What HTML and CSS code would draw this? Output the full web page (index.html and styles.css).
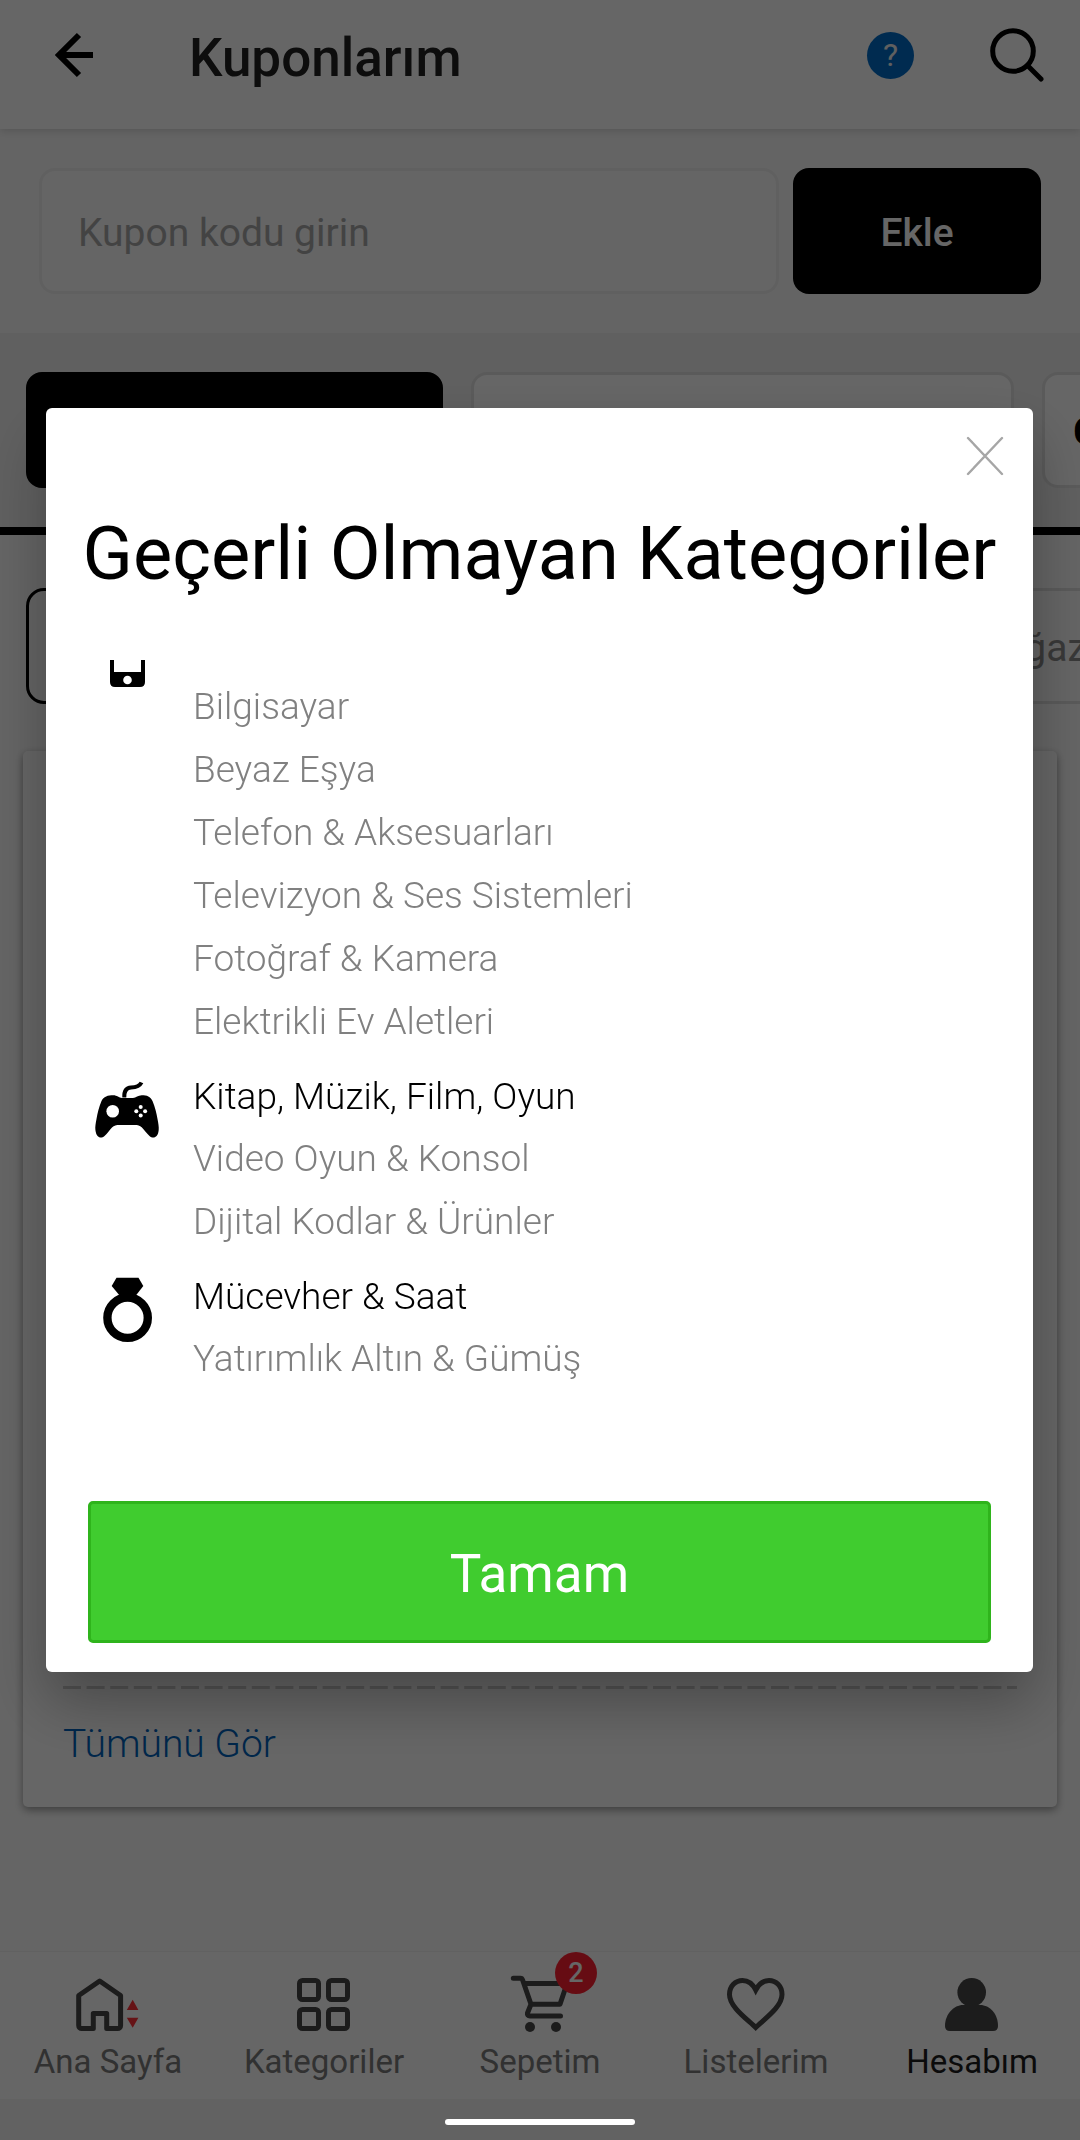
FILE: index.html
```html
<!DOCTYPE html>
<html lang="tr">
<head>
<meta charset="utf-8">
<meta name="viewport" content="width=device-width, initial-scale=1">
<title>Kuponlarım</title>
<link rel="stylesheet" href="styles.css">
</head>
<body>
<div class="page">
  <header class="header">
    <button class="icon-button" type="button" aria-label="Geri">
      <svg width="40" height="46" viewBox="0 0 40 46" fill="none" stroke="#000" stroke-width="6"><path d="M25 3 5 23 25 43M5 23H39"/></svg>
    </button>
    <h1 class="header-title">Kuponlarım</h1>
    <button class="help" type="button" aria-label="Yardım">?</button>
    <button class="icon-button" type="button" aria-label="Ara">
      <svg width="54" height="54" viewBox="0 0 54 54" fill="none" stroke="#000" stroke-width="5"><circle cx="23" cy="23" r="20.3"/><path d="M37.5 37.5 51 51" stroke-linecap="round"/></svg>
    </button>
  </header>

  <form class="coupon-form">
    <input class="coupon-input" type="text" placeholder="Kupon kodu girin" aria-label="Kupon kodu">
    <button class="coupon-add" type="button">Ekle</button>
  </form>

  <div class="tabs">
    <button class="tab tab-active" type="button" aria-label="Kuponlar"></button>
    <button class="tab tab-wide" type="button" aria-label="Fırsatlar"></button>
    <button class="tab" type="button">G</button>
  </div>

  <main class="content">
    <div class="chips">
      <button class="chip chip-active" type="button" aria-label="Tümü"></button>
      <button class="chip" type="button">Mağazalar</button>
    </div>
    <section class="card">
      <svg class="card-divider" height="3" aria-hidden="true"><line x1="0" y1="1.5" x2="100%" y2="1.5" stroke="#d0d0d0" stroke-width="3" stroke-dasharray="18 5.6"/></svg>
      <a class="card-link" href="#">Tümünü Gör</a>
    </section>
  </main>

  <nav class="nav">
    <a class="nav-item" href="#">
      <svg width="72" height="56" viewBox="0 0 72 56"><path d="M27.7 4 48.6 18.5V48.5a3 3 0 0 1-3 3H34.7V36.5H21.3V51.5H9.7a3 3 0 0 1-3-3V18.5z" fill="none" stroke="#464646" stroke-width="5" stroke-linejoin="round"/><path d="M60.7 22.7 66.4 33H54.8zM54.8 40.7H66.4L60.7 50.8z" fill="#ff3038"/></svg>
      <span class="nav-label">Ana Sayfa</span>
    </a>
    <a class="nav-item" href="#">
      <svg width="72" height="56" viewBox="0 0 72 56" fill="none" stroke="#464646" stroke-width="5"><rect x="11.5" y="3.5" width="19" height="19" rx="3"/><rect x="40.5" y="3.5" width="19" height="19" rx="3"/><rect x="11.5" y="32.5" width="19" height="19" rx="3"/><rect x="40.5" y="32.5" width="19" height="19" rx="3"/></svg>
      <span class="nav-label">Kategoriler</span>
    </a>
    <a class="nav-item" href="#">
      <span class="nav-icon">
        <svg width="72" height="56" viewBox="0 0 72 56" overflow="visible"><path d="M9.3 1.3H16.5Q18 1.3 18.6 3L27 27.3H56L63 6.5H21M27 27.3 23.5 36Q23 39 26 39H56.5" fill="none" stroke="#464646" stroke-width="5" stroke-linecap="round" stroke-linejoin="round"/><circle cx="26" cy="50" r="5" fill="#464646"/><circle cx="52" cy="50" r="5" fill="#464646"/></svg>
        <span class="badge">2</span>
      </span>
      <span class="nav-label">Sepetim</span>
    </a>
    <a class="nav-item" href="#">
      <svg width="72" height="56" viewBox="0 0 72 56" fill="none" stroke="#464646" stroke-width="5"><path d="M35.7 50.5C27 42 9.5 30 9.5 17.5C9.5 9 15.5 3.5 22.5 3.5C29 3.5 33 7.5 35.7 13C38.5 7.5 42.5 3.5 49 3.5C56 3.5 62 9 62 17.5C62 30 44.5 42 35.7 50.5z"/></svg>
      <span class="nav-label">Listelerim</span>
    </a>
    <a class="nav-item nav-current" href="#" aria-current="page">
      <svg width="72" height="56" viewBox="0 0 72 56" fill="#464646"><circle cx="35.7" cy="15.3" r="14.3"/><path d="M9 49C9 37 18 28 27 28H44C54 28 62 37 62 49Q62 54 57 54H14Q9 54 9 49z"/></svg>
      <span class="nav-label">Hesabım</span>
    </a>
  </nav>
  <div class="system-bar"></div>
</div>

<div class="overlay">
  <div class="modal" role="dialog" aria-modal="true" aria-labelledby="modal-title">
    <button class="modal-close" type="button" aria-label="Kapat">
      <svg width="38" height="40" viewBox="0 0 38 40" fill="none" stroke="#a6a6a6" stroke-width="2.4" stroke-linecap="round"><path d="M2 2 36 38M36 2 2 38"/></svg>
    </button>
    <h2 class="modal-title" id="modal-title">Geçerli Olmayan Kategoriler</h2>
    <div class="categories">
      <section class="category">
        <svg width="64" height="28" viewBox="0 0 64 28"><path d="M15 0H19V12H46V0H50V22Q50 27 45 27H20Q15 27 15 22z"/><circle cx="32.5" cy="20" r="4.3" fill="#fff"/></svg>
        <ul class="category-list">
          <li>Bilgisayar</li>
          <li>Beyaz Eşya</li>
          <li>Telefon &amp; Aksesuarları</li>
          <li>Televizyon &amp; Ses Sistemleri</li>
          <li>Fotoğraf &amp; Kamera</li>
          <li>Elektrikli Ev Aletleri</li>
        </ul>
      </section>
      <section class="category">
        <svg class="category-icon" width="64" height="64" viewBox="0 -2 64 64"><path d="M29.3 18.5C29 12.5 31 8.8 36 8.5C42 8.3 44.8 7 46.5 3.5" fill="none" stroke="#000" stroke-width="4"/><path d="M18.3 16.3C22 16.3 24 19 27 19H38C41 19 43 16.3 46.7 16.3C52 16.3 55.5 17.5 57.5 22C60 28 61.5 34 62.5 40C63.3 44 64 48 63.7 51C63 59 58 60 54.5 57C51.5 54.5 49 50.5 46.7 48.3C45 46.5 42.5 46 40 46H24.3C21.5 46 19 46.5 17 48.5C14.5 51 12.5 54.5 9.5 57C6 60 1.3 59 .4 51C0 48 .7 44 1.5 40C2.5 34 4 28 6.5 22C8.5 17.5 13 16.3 18.3 16.3z"/><g fill="#fff"><circle cx="17.7" cy="32.3" r="6.3"/><circle cx="45.7" cy="28" r="2"/><circle cx="45.7" cy="36.6" r="2"/><circle cx="41.3" cy="32.3" r="2"/><circle cx="50.1" cy="32.3" r="2"/></g></svg>
        <div>
          <h3 class="category-title">Kitap, Müzik, Film, Oyun</h3>
          <ul class="category-list">
            <li>Video Oyun &amp; Konsol</li>
            <li>Dijital Kodlar &amp; Ürünler</li>
          </ul>
        </div>
      </section>
      <section class="category">
        <svg class="category-icon" width="64" height="66" viewBox="0 0 64 66"><path d="M21.5 .7H43.5L48.3 9 40.5 19H25L16.7 9z"/><circle cx="32.6" cy="40.7" r="20.2" fill="none" stroke="#000" stroke-width="8.4"/></svg>
        <div>
          <h3 class="category-title">Mücevher &amp; Saat</h3>
          <ul class="category-list">
            <li>Yatırımlık Altın &amp; Gümüş</li>
          </ul>
        </div>
      </section>
    </div>
    <button class="modal-ok" type="button">Tamam</button>
  </div>
  <div class="home-indicator"></div>
</div>
</body>
</html>
```
FILE: styles.css
```css
* {
  box-sizing: border-box;
}

body {
  margin: 0;
  font-family: Roboto, "Noto Sans", sans-serif;
  background: #fdfdfd;
  color: #000;
}

h1, h2, h3, ul {
  margin: 0;
  padding: 0;
  font-weight: 400;
  list-style: none;
}

button {
  margin: 0;
  padding: 0;
  border: 0;
  background: none;
  font-family: inherit;
  color: inherit;
}

a {
  text-decoration: none;
}

svg {
  display: block;
}

.page {
  display: flex;
  flex-direction: column;
  min-height: 100vh;
  overflow: hidden;
}

/* top bar */
.header {
  position: relative;
  display: flex;
  align-items: center;
  height: 129px;
  padding: 0 36px 19px 54px;
  background: #fff;
  box-shadow: 0 2px 8px rgba(0, 0, 0, 0.15);
}

.header-title {
  flex: 1;
  padding: 6px 0 0 95px;
  font-size: 53px;
  line-height: 64px;
  font-weight: 500;
  color: #212121;
}

.help {
  width: 47px;
  height: 47px;
  margin-right: 76px;
  border-radius: 50%;
  background: #006cc8;
  color: #f0f0f0;
  font-size: 32px;
  line-height: 47px;
}

/* coupon code entry */
.coupon-form {
  display: flex;
  gap: 14px;
  padding: 39px 39px;
  background: #fafafa;
}

.coupon-input,
.coupon-add {
  height: 126px;
  border-radius: 16px;
  font-size: 39px;
}

.coupon-input {
  flex: 1;
  min-width: 0;
  padding: 3px 36px 0;
  border: 3px solid #f0f0f0;
  background: #fcfcfc;
  font-family: inherit;
}

.coupon-input::placeholder {
  color: #a8a8a8;
  opacity: 1;
}

.coupon-add {
  width: 248px;
  padding-top: 3px;
  background: #000;
  color: #fff;
  font-weight: 500;
}

/* coupon type tabs */
.tabs {
  display: flex;
  gap: 28px;
  padding: 39px 0 39px 26px;
  border-bottom: 8px solid #000;
  background: #f0f0f0;
  overflow: hidden;
}

.tab {
  flex: none;
  width: 417px;
  height: 116px;
  padding: 3px 0 0 28px;
  border: 3px solid #e2e2e2;
  border-radius: 16px;
  background: #fff;
  font-size: 39px;
  font-weight: 700;
  text-align: left;
}

.tab-active {
  border-color: #000;
  background: #000;
}

.tab-wide {
  width: 543px;
}

/* coupon list */
.content {
  flex: 1;
}

.chips {
  display: flex;
  gap: 20px;
  padding: 53px 0 47px 26px;
  overflow: hidden;
}

.chip {
  flex: none;
  width: 420px;
  height: 116px;
  border: 3px solid #e0e0e0;
  border-radius: 18px;
  font-size: 39px;
  color: #8c8c8c;
}

.chip + .chip {
  width: auto;
  margin-left: 452px;
  padding: 3px 48px 0;
}

.chip-active {
  border-color: #000;
}

.card {
  display: flex;
  flex-direction: column;
  justify-content: flex-end;
  min-height: 1056px;
  margin: 0 23px;
  padding: 0 40px 39px;
  border-radius: 5px;
  background: #fff;
  box-shadow: 0 3px 8px rgba(0, 0, 0, 0.4);
}

.card-divider {
  width: 100%;
  margin-bottom: 31px;
}

.card-link {
  font-size: 39px;
  line-height: 48px;
  font-weight: 300;
  color: #0062bb;
}

/* bottom navigation */
.nav {
  display: flex;
  height: 148px;
  padding-top: 25px;
  border-top: 1px solid #f2f2f2;
  background: #fff;
}

.nav-item {
  flex: 1;
  display: flex;
  flex-direction: column;
  align-items: center;
  gap: 9px;
  color: #7c7c7c;
}

.nav-label {
  font-size: 33px;
  line-height: 40px;
}

.nav-current {
  color: #1c1c1c;
}

.nav-icon {
  position: relative;
}

.badge {
  position: absolute;
  top: -25px;
  left: 51px;
  width: 42px;
  height: 42px;
  border-radius: 50%;
  background: #ff2030;
  color: #fff;
  font-size: 27px;
  line-height: 42px;
  font-weight: 500;
  text-align: center;
}

.system-bar {
  height: 41px;
  background: #f6f6f6;
}

/* dialog */
.overlay {
  position: fixed;
  inset: 0;
  display: flex;
  flex-direction: column;
  align-items: center;
  justify-content: center;
  padding: 0 47px 60px 46px;
  background: rgba(0, 0, 0, 0.6);
}

.modal {
  width: 100%;
  padding: 28px 42px 29px;
  border-radius: 6px;
  background: #fff;
  box-shadow: 0 30px 60px rgba(0, 0, 0, 0.3);
}

.modal-close {
  display: block;
  margin: 0 -13px 0 auto;
}

.modal-title {
  margin: 33px -10px 0;
  font-size: 74px;
  line-height: 90px;
  text-align: center;
  white-space: nowrap;
}

.categories {
  display: flex;
  flex-direction: column;
  gap: 14px;
  margin: 61px 0 111px;
  padding-left: 7px;
  font-size: 37px;
}

.category {
  display: flex;
  align-items: flex-start;
  gap: 34px;
}

.category-icon {
  margin-top: 10px;
}

.category-title {
  font-size: 37px;
  line-height: 60px;
  font-weight: 300;
}

.category-list {
  line-height: 63px;
  font-weight: 300;
  color: #808080;
}

.category:first-child .category-list {
  padding-top: 15px;
}

.modal-ok {
  width: 100%;
  height: 142px;
  padding-top: 3px;
  border: 3px solid #2fb41c;
  border-radius: 5px;
  background: #40cc2f;
  color: #fff;
  font-size: 53px;
}

.home-indicator {
  position: absolute;
  bottom: 15px;
  left: 50%;
  width: 190px;
  height: 6px;
  margin-left: -95px;
  border-radius: 3px;
  background: #fff;
}
```
